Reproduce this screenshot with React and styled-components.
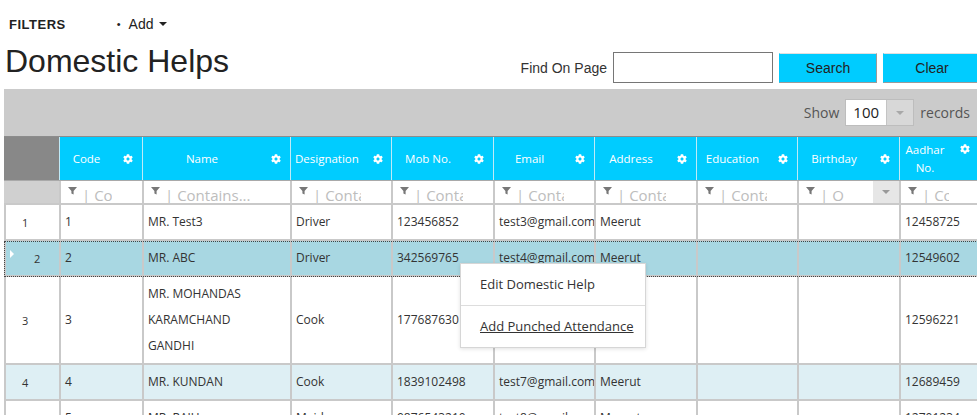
import React from 'react'
import styled, { createGlobalStyle } from 'styled-components'
import { FaCog } from 'react-icons/fa'

const columns = [
  { key: 'code', label: 'Code', width: 83 },
  { key: 'name', label: 'Name', width: 148 },
  { key: 'designation', label: 'Designation', width: 101 },
  { key: 'mobile', label: 'Mob No.', width: 102 },
  { key: 'email', label: 'Email', width: 101 },
  { key: 'address', label: 'Address', width: 102 },
  { key: 'education', label: 'Education', width: 101 },
  { key: 'birthday', label: 'Birthday', width: 102, date: true },
  { key: 'aadhar', label: 'Aadhar No.', width: 80 },
]

const template = `55px ${columns.map(c => c.width + 'px').join(' ')}`

const rows = [
  { n: 1, code: '1', name: ['MR. Test3'], designation: 'Driver', mobile: '123456852', email: 'test3@gmail.com', address: 'Meerut', aadhar: '12458725' },
  { n: 2, code: '2', name: ['MR. ABC'], designation: 'Driver', mobile: '342569765', email: 'test4@gmail.com', address: 'Meerut', aadhar: '12549602', selected: true },
  { n: 3, code: '3', name: ['MR. MOHANDAS', 'KARAMCHAND', 'GANDHI'], designation: 'Cook', mobile: '177687630', email: 'test5@gmail.com', address: 'Meerut', aadhar: '12596221' },
  { n: 4, code: '4', name: ['MR. KUNDAN'], designation: 'Cook', mobile: '1839102498', email: 'test7@gmail.com', address: 'Meerut', aadhar: '12689459', alt: true },
  { n: 5, code: '5', name: ['MR. RAJU'], designation: 'Maid', mobile: '9876543210', email: 'test8@gmail.com', address: 'Meerut', aadhar: '12701234' },
]

const GlobalStyle = createGlobalStyle`
  html, body {
    margin: 0;
    overflow: hidden;
    background: #fff;
    font-family: "Liberation Sans", Arial, sans-serif;
  }
`

const Funnel = () => (
  <svg width="9" height="8" viewBox="0 0 9 8">
    <path d="M0 0H9L5.6 4V7.5L3.4 6.4V4Z" fill="#777" />
  </svg>
)

export default function App() {
  return (
    <Page>
      <GlobalStyle />
      <TopBar>
        <FiltersLabel>FILTERS</FiltersLabel>
        <AddMenu>
          <Bullet>•</Bullet>
          Add
          <Caret />
        </AddMenu>
      </TopBar>

      <TitleRow>
        <Title>Domestic Helps</Title>
        <FindGroup>
          <FindLabel>Find On Page</FindLabel>
          <FindInput />
          <CyanButton>Search</CyanButton>
          <CyanButton>Clear</CyanButton>
        </FindGroup>
      </TitleRow>

      <TableWrap>
        <Toolbar>
          <ShowText>Show</ShowText>
          <PageSize>
            <PageSizeValue>100</PageSizeValue>
            <PageSizeArrow><Caret $color="#a8a8a8" /></PageSizeArrow>
          </PageSize>
          <ShowText>records</ShowText>
        </Toolbar>

        <Grid>
          <GridRow $header>
            <CornerCell />
            {columns.map(c => (
              <HeaderCell key={c.key}>
                <HeaderLabel>{c.label}</HeaderLabel>
                <Gear><FaCog size={10} /></Gear>
              </HeaderCell>
            ))}
          </GridRow>

          <GridRow $filter>
            <FilterGutter />
            {columns.map(c => (
              <FilterCell key={c.key}>
                <FilterInput style={{ width: c.date ? 38 : c.width - 39 }}>
                  <FunnelWrap><Funnel /></FunnelWrap>
                  <Placeholder>| {c.date ? 'On...' : 'Contains...'}</Placeholder>
                </FilterInput>
                {c.date && <DateButton><Caret $color="#999" /></DateButton>}
              </FilterCell>
            ))}
          </GridRow>

          {rows.map(r => (
            <GridRow key={r.n} $selected={r.selected} $alt={r.alt}>
              <RowNumber $selected={r.selected}>
                {r.selected && <RowArrow />}
                {r.n}
              </RowNumber>
              {columns.map(c => (
                <Cell key={c.key}>
                  <CellText $clip={c.key === 'email'}>
                    {c.key === 'name'
                      ? r.name.map((l, i) => <div key={i}>{l}</div>)
                      : r[c.key] || ''}
                  </CellText>
                </Cell>
              ))}
            </GridRow>
          ))}
        </Grid>
      </TableWrap>

      <ContextMenu>
        <MenuItem>Edit Domestic Help</MenuItem>
        <MenuItem $link>Add Punched Attendance</MenuItem>
      </ContextMenu>
    </Page>
  )
}

const Page = styled.div`
  position: relative;
  padding-left: 4px;
  width: 977px;
  height: 415px;
  overflow: hidden;
`

const TopBar = styled.div`
  display: flex;
  align-items: center;
  height: 38px;
  padding-top: 5px;
`

const FiltersLabel = styled.div`
  margin-left: 5px;
  font-size: 13px;
  font-weight: bold;
  letter-spacing: 0.5px;
  color: #222;
`

const AddMenu = styled.div`
  display: flex;
  align-items: center;
  margin-left: 51px;
  font-size: 14px;
  color: #222;
`

const Bullet = styled.span`
  font-size: 11px;
  margin-right: 8px;
`

const Caret = styled.span`
  display: inline-block;
  width: 0;
  height: 0;
  margin-left: 6px;
  border-left: 4px solid transparent;
  border-right: 4px solid transparent;
  border-top: 4px solid ${p => p.$color || '#222'};
`

const TitleRow = styled.div`
  display: flex;
  justify-content: space-between;
  align-items: flex-start;
  height: 46px;
  width: 977px;
`

const Title = styled.h1`
  margin: 0 0 0 1px;
  font-size: 32px;
  line-height: 36px;
  font-weight: normal;
  color: #222;
`

const FindGroup = styled.div`
  display: flex;
  align-items: center;
  gap: 6px;
  margin-top: 9px;
`

const FindLabel = styled.span`
  font-size: 14px;
  color: #333;
`

const FindInput = styled.div`
  width: 158px;
  height: 29px;
  border: 1px solid #767676;
  background: #fff;
`

const CyanButton = styled.div`
  width: 96px;
  height: 28px;
  display: flex;
  align-items: center;
  justify-content: center;
  background: #00ccff;
  border: 1px solid #00ccff;
  border-right-color: #9a9a9a;
  border-bottom-color: #9a9a9a;
  border-top-color: #e0e0e0;
  font-size: 14px;
  color: #222;
`

const TableWrap = styled.div`
  width: 973px;
  overflow: hidden;
`

const Toolbar = styled.div`
  display: flex;
  justify-content: flex-end;
  align-items: center;
  gap: 6px;
  height: 47px;
  padding-right: 7px;
  background: #cbcbcb;
  border-bottom: 1px solid #8c8c8c;
  font-family: "Open Sans", sans-serif;
`

const ShowText = styled.span`
  font-size: 14px;
  color: #555;
`

const PageSize = styled.div`
  display: flex;
  height: 25px;
  border: 1px solid #bdbdbd;
  background: #fff;
`

const PageSizeValue = styled.div`
  width: 33px;
  padding-left: 7px;
  font-size: 15px;
  line-height: 25px;
  color: #222;
`

const PageSizeArrow = styled.div`
  width: 26px;
  display: flex;
  align-items: center;
  justify-content: center;
  background: #d8d8d8;
  border-left: 1px solid #c4c4c4;
  & > span { margin-left: 0; }
`

const Grid = styled.div`
  width: 1000px;
  font-family: "Open Sans", sans-serif;
`

const GridRow = styled.div`
  display: grid;
  grid-template-columns: ${template};
  position: relative;
  background: ${p => (p.$selected ? '#a8d7e2' : p.$alt ? '#deeff4' : p.$header ? '#00ccff' : '#fff')};
  border-bottom: ${p => (p.$header ? '1px solid #a9a9a9' : '2px solid #c9c9c9')};
  outline: ${p => (p.$selected ? '1px dotted #444' : 'none')};
  outline-offset: -1px;
  min-height: ${p => (p.$header ? '43px' : p.$filter ? '22px' : '34px')};
`

const CornerCell = styled.div`
  background: #888;
`

const HeaderCell = styled.div`
  display: flex;
  align-items: center;
  border-left: 1px solid #bfeaf7;
  padding-right: 9px;
  color: #fff;
`

const HeaderLabel = styled.div`
  flex: 1;
  text-align: center;
  font-size: 11.5px;
  line-height: 18px;
  padding-left: 4px;
`

const Gear = styled.span`
  display: flex;
  align-self: center;
  margin-left: 14px;
  color: #fff;
  ${HeaderCell}:last-child & {
    align-self: flex-start;
    margin-top: 7px;
  }
`

const FilterGutter = styled.div`
  background: #d0d0d0;
`

const FilterCell = styled.div`
  display: flex;
  height: 22px;
  overflow: hidden;
  padding-left: 7px;
  border-left: 2px solid #c9c9c9;
  background: #fff;
`

const FilterInput = styled.div`
  display: flex;
  align-items: flex-start;
  overflow: hidden;
  white-space: nowrap;
`

const FunnelWrap = styled.span`
  display: flex;
  margin-top: 6px;
  margin-right: 5px;
  flex-shrink: 0;
`

const Placeholder = styled.span`
  font-size: 15px;
  line-height: 18px;
  padding-top: 5px;
  color: #bdbdbd;
`

const DateButton = styled.div`
  margin-left: auto;
  width: 26px;
  display: flex;
  align-items: center;
  justify-content: center;
  background: #e6e6e6;
  & > span { margin-left: 0; }
`

const RowNumber = styled.div`
  display: flex;
  align-items: center;
  border-left: 2px solid #c9c9c9;
  padding-left: ${p => (p.$selected ? '4px' : '16px')};
  font-size: 11px;
  color: #333;
`

const RowArrow = styled.span`
  width: 0;
  height: 0;
  margin-right: 20px;
  margin-top: -8px;
  border-left: 4px solid #fff;
  border-top: 4px solid transparent;
  border-bottom: 4px solid transparent;
`

const Cell = styled.div`
  display: flex;
  align-items: center;
  padding: 4px;
  border-left: 2px solid #c9c9c9;
  overflow: hidden;
`

const CellText = styled.div`
  font-size: 12px;
  line-height: 26px;
  color: #333;
  white-space: ${p => (p.$clip ? 'nowrap' : 'normal')};
`

const ContextMenu = styled.div`
  position: absolute;
  left: 460px;
  top: 263px;
  width: 184px;
  background: #fff;
  border: 1px solid #d6d6d6;
  box-shadow: 0 1px 4px rgba(0, 0, 0, 0.12);
  font-family: "Open Sans", sans-serif;
`

const MenuItem = styled.div`
  height: 41px;
  line-height: 41px;
  padding-left: 19px;
  font-size: 13px;
  color: #333;
  text-decoration: ${p => (p.$link ? 'underline' : 'none')};
  & + & { border-top: 1px solid #ddd; }
`
